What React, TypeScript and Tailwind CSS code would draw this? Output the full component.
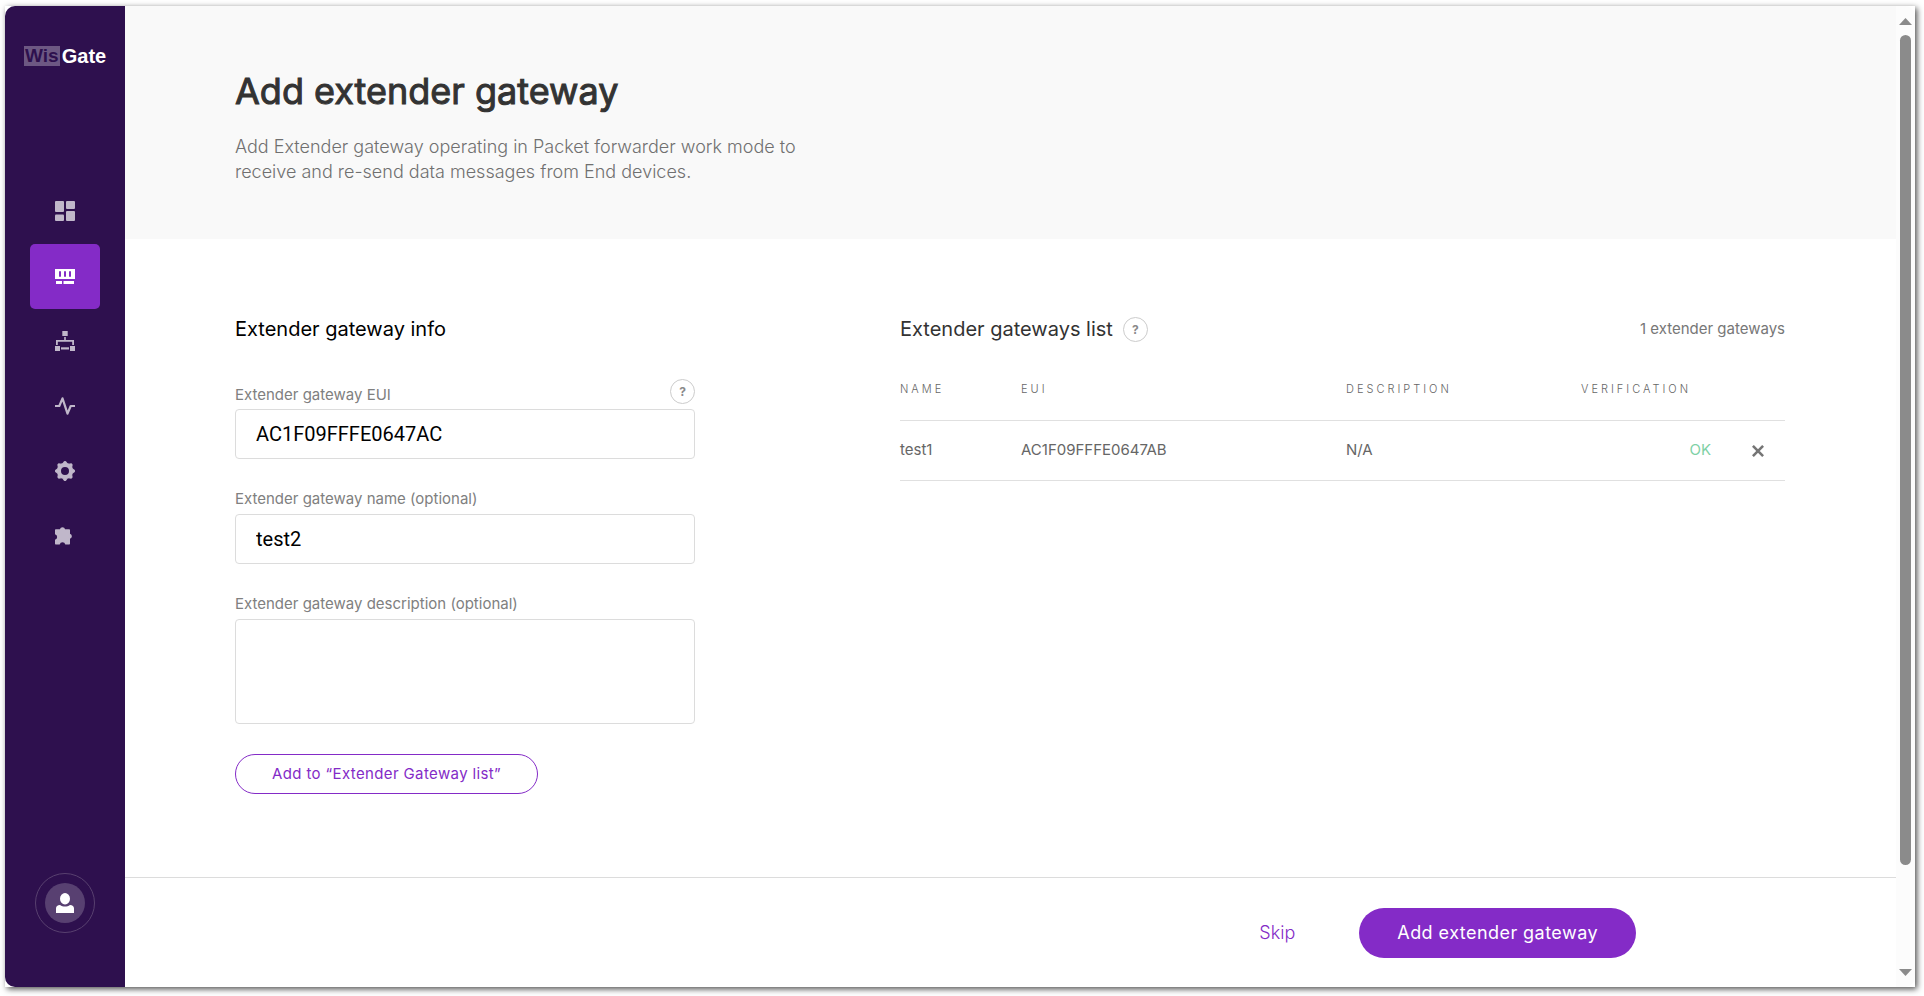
import React from 'react';

const inter = "font-['Inter',sans-serif]";

function HelpButton({ label }: { label: string }) {
  return (
    <button
      type="button"
      aria-label={label}
      className="flex h-[25px] w-[25px] shrink-0 items-center justify-center rounded-full border border-[#cccccc] text-xs leading-none font-bold text-[#8a8a8a]"
    >
      ?
    </button>
  );
}

const gearTeeth = [0, 45, 90, 135, 180, 225, 270, 315];

const icons: { name: string; drawing: React.ReactNode }[] = [
  {
    name: 'Dashboard',
    drawing: (
      <>
        <rect x="0" y="0" width="9" height="11" rx="1" />
        <rect x="0" y="13.5" width="9" height="6.5" rx="1" />
        <rect x="11" y="0" width="9" height="8" rx="1" />
        <rect x="11" y="10" width="9" height="10" rx="1" />
      </>
    ),
  },
  {
    name: 'LoRa gateway',
    drawing: (
      <>
        <path
          fillRule="evenodd"
          d="M0 3h20v10H0zM4 5.3v5.400h2v-5.400zM9 5.3v5.400h2v-5.400zM14 5.3v5.400h2v-5.400z"
        />
        <rect x="1" y="15" width="6" height="3" />
        <rect x="8.5" y="15" width="10.5" height="3" />
      </>
    ),
  },
  {
    name: 'Network',
    drawing: (
      <>
        <rect x="7.3" y="0" width="5.4" height="5" />
        <path d="M9.2 6h1.600v3H19v5h-1.800v-3.200H2.800V14H1V9h8.200z" />
        <rect x="0" y="15" width="5" height="5" />
        <rect x="6" y="16.300" width="8" height="2.200" />
        <rect x="15" y="15" width="5" height="5" />
      </>
    ),
  },
  {
    name: 'Diagnostics',
    drawing: (
      <path
        fill="none"
        stroke="currentColor"
        strokeWidth="2.200"
        strokeLinejoin="round"
        d="M0 10h4.300L7.500 2.300 12.500 17.700 15.700 10H20"
      />
    ),
  },
  {
    name: 'Settings',
    drawing: (
      <>
        <circle cx="10" cy="10" r="6.100" fill="none" stroke="currentColor" strokeWidth="4.200" />
        {gearTeeth.map((angle) => (
          <path key={angle} d="M7.300 2.600 9 .2Q10-.2 11 .2L12.700 2.600z" transform={`rotate(${angle} 10 10)`} />
        ))}
      </>
    ),
  },
  {
    name: 'Extensions',
    drawing: (
      <path d="M1 3.200h3.900a2.700 2.700 0 0 1 5.200 0H14c.6 0 1 .4 1 1v3.600a2.600 2.600 0 0 1 0 5v4.700c0 .6-.4 1-1 1h-3.700a2.900 2.900 0 0 0-5.600 0H1c-.6 0-1-.4-1-1v-3.700a2.900 2.900 0 0 0 0-5.600v-4c0-.6.4-1 1-1z" />
    ),
  },
];

function Sidebar() {
  return (
    <aside className="flex w-[120px] shrink-0 flex-col items-center rounded-l-[10px] bg-[#2e104e]">
      <div className="mt-10 flex h-5 items-center font-['Liberation_Sans',sans-serif] text-xl leading-5 font-bold">
        <span className="flex h-5 w-9 items-center justify-center bg-[#6d5883] text-[19px] text-[#2e104e]">Wis</span>
        <span className="ml-0.5 text-white">Gate</span>
      </div>
      <nav className="mt-[113px] flex flex-col" aria-label="Main">
        {icons.map((icon, i) => (
          <a
            key={icon.name}
            href="#"
            aria-label={icon.name}
            className={
              i === 1
                ? 'flex h-[65px] w-[70px] items-center justify-center rounded-[5px] bg-[#842bc7] pb-px text-white'
                : 'flex h-[65px] w-[70px] items-center justify-center rounded-[5px] pb-px text-[#c0b7ca]'
            }
          >
            <svg viewBox="0 0 20 20" className="h-5 w-5" fill="currentColor">
              {icon.drawing}
            </svg>
          </a>
        ))}
      </nav>
      <button
        type="button"
        aria-label="Account"
        className="mt-auto mb-[54px] flex h-[60px] w-[60px] items-center justify-center rounded-full border border-[#58406f]"
      >
        <span className="flex h-10 w-10 items-center justify-center rounded-full bg-[#584071] text-white">
          <svg viewBox="0 0 20 20" className="h-5 w-5" fill="currentColor">
            <ellipse cx="10" cy="5.700" rx="5" ry="5.700" />
            <path d="M1 20v-4.500C1 13.500 2.500 12 5 12c1.500 1 3.200 1.500 5 1.500s3.500-.5 5-1.500c2.500 0 4 1.500 4 3.500V20z" />
          </svg>
        </span>
      </button>
    </aside>
  );
}

function Scrollbar() {
  return (
    <div className="flex w-[19px] shrink-0 flex-col items-center rounded-r-[10px] bg-[#fcfcfc] pt-3 pb-[11px] text-[#8b8b8b]" aria-hidden="true">
      <svg viewBox="0 0 13 7" className="h-[7px] w-[13px]" fill="currentColor">
        <path d="M6.500 0 13 7H0z" />
      </svg>
      <div className="mt-2.5 mb-[104px] w-[11px] grow rounded-full bg-[#8b8b8b]" />
      <svg viewBox="0 0 13 7" className="h-[7px] w-[13px]" fill="currentColor">
        <path d="M0 0h13L6.500 7z" />
      </svg>
    </div>
  );
}

function ExtenderForm() {
  const label = 'text-[15px] leading-[18px] text-[#808080]';
  const field =
    "block w-full rounded-[4px] border border-[#dcdcdc] bg-white px-5 font-['Roboto',sans-serif] text-xl text-black outline-none";
  return (
    <form className="w-[460px] shrink-0">
      <h2 className="text-xl leading-[25px] text-black">Extender gateway info</h2>
      <div className="mt-[37px] flex items-end justify-between pb-[5px]">
        <label htmlFor="eui" className={label}>Extender gateway EUI</label>
        <HelpButton label="About the EUI" />
      </div>
      <input id="eui" type="text" defaultValue="AC1F09FFFE0647AC" className={field + ' h-[50px]'} />
      <label htmlFor="name" className={label + ' mt-[31px] mb-1.5 block'}>Extender gateway name (optional)</label>
      <input id="name" type="text" defaultValue="test2" className={field + ' h-[50px]'} />
      <label htmlFor="description" className={label + ' mt-[31px] mb-1.5 block'}>Extender gateway description (optional)</label>
      <textarea id="description" className={field + ' h-[105px] resize-none py-3'} />
      <button
        type="button"
        className="mt-[30px] h-10 rounded-full border border-[#842bc7] px-9 text-[15px] tracking-wide text-[#842bc7]"
      >
        Add to “Extender Gateway list”
      </button>
    </form>
  );
}

function ExtenderList() {
  return (
    <section className="min-w-0 grow">
      <div className="flex items-center justify-between">
        <div className="flex items-center gap-2.5">
          <h2 className="text-xl leading-[25px] text-[#333333]">Extender gateways list</h2>
          <HelpButton label="About the list" />
        </div>
        <p className="text-[15px] text-[#777777]">1 extender gateways</p>
      </div>
      <table className="mt-4 w-full table-fixed border-collapse text-left text-[15px] text-[#666666]">
        <colgroup>
          <col className="w-[121px]" />
          <col />
          <col className="w-[235px]" />
          <col className="w-[130px]" />
          <col className="w-[74px]" />
        </colgroup>
        <thead>
          <tr className="h-[62px] border-b border-[#e0e0e0] text-[11px] tracking-[3px]">
            <th className="p-0 font-light">NAME</th>
            <th className="p-0 font-light">EUI</th>
            <th className="p-0 font-light">DESCRIPTION</th>
            <th className="p-0 font-light">VERIFICATION</th>
            <th className="p-0" aria-label="Actions" />
          </tr>
        </thead>
        <tbody>
          <tr className="h-[60px] border-b border-[#e0e0e0]">
            <td className="p-0">test1</td>
            <td className="p-0">AC1F09FFFE0647AB</td>
            <td className="p-0">N/A</td>
            <td className="p-0 text-right text-[#7fd1a5]">OK</td>
            <td className="p-0 pr-[21px] text-right">
              <button type="button" aria-label="Remove test1" className="inline-flex h-5 w-3 items-center align-middle">
                <svg viewBox="0 0 12 12" className="h-3 w-3" fill="none" stroke="#757575" strokeWidth="2.600">
                  <path d="M.9.9l10.200 10.200M11.100.9.9 11.100" />
                </svg>
              </button>
            </td>
          </tr>
        </tbody>
      </table>
    </section>
  );
}

export default function App() {
  return (
    <div className={'flex h-screen min-h-[900px] bg-white pt-1.5 pr-[9px] pb-[9px] pl-[5px] ' + inter}>
      <div className="flex min-w-0 grow bg-white shadow-[2px_2px_6px_rgba(0,0,0,0.7)]">
        <Sidebar />
        <main className="flex min-w-0 grow flex-col">
          <header className="h-[233px] bg-[#f9f9f9] px-[110px] pt-[62px]">
            <h1 className="text-4xl leading-[46px] font-normal text-[#333333] [-webkit-text-stroke:1px_#333333]">
              Add extender gateway
            </h1>
            <p className="mt-5 max-w-[580px] text-lg leading-[25px] font-light text-[#707070]">
              Add Extender gateway operating in Packet forwarder work mode to receive and re-send data messages from End devices.
            </p>
          </header>
          <div className="flex grow items-start gap-[205px] pt-[78px] pr-[111px] pl-[110px]">
            <ExtenderForm />
            <ExtenderList />
          </div>
          <footer className="flex h-[110px] shrink-0 items-center justify-end gap-16 border-t border-[#dcdcdc] pr-[260px] text-lg">
            <a href="#" className="font-light text-[#842bc7]">Skip</a>
            <button type="button" className="h-[50px] rounded-full bg-[#842bc7] px-[38px] tracking-wide text-white">
              Add extender gateway
            </button>
          </footer>
        </main>
        <Scrollbar />
      </div>
    </div>
  );
}
